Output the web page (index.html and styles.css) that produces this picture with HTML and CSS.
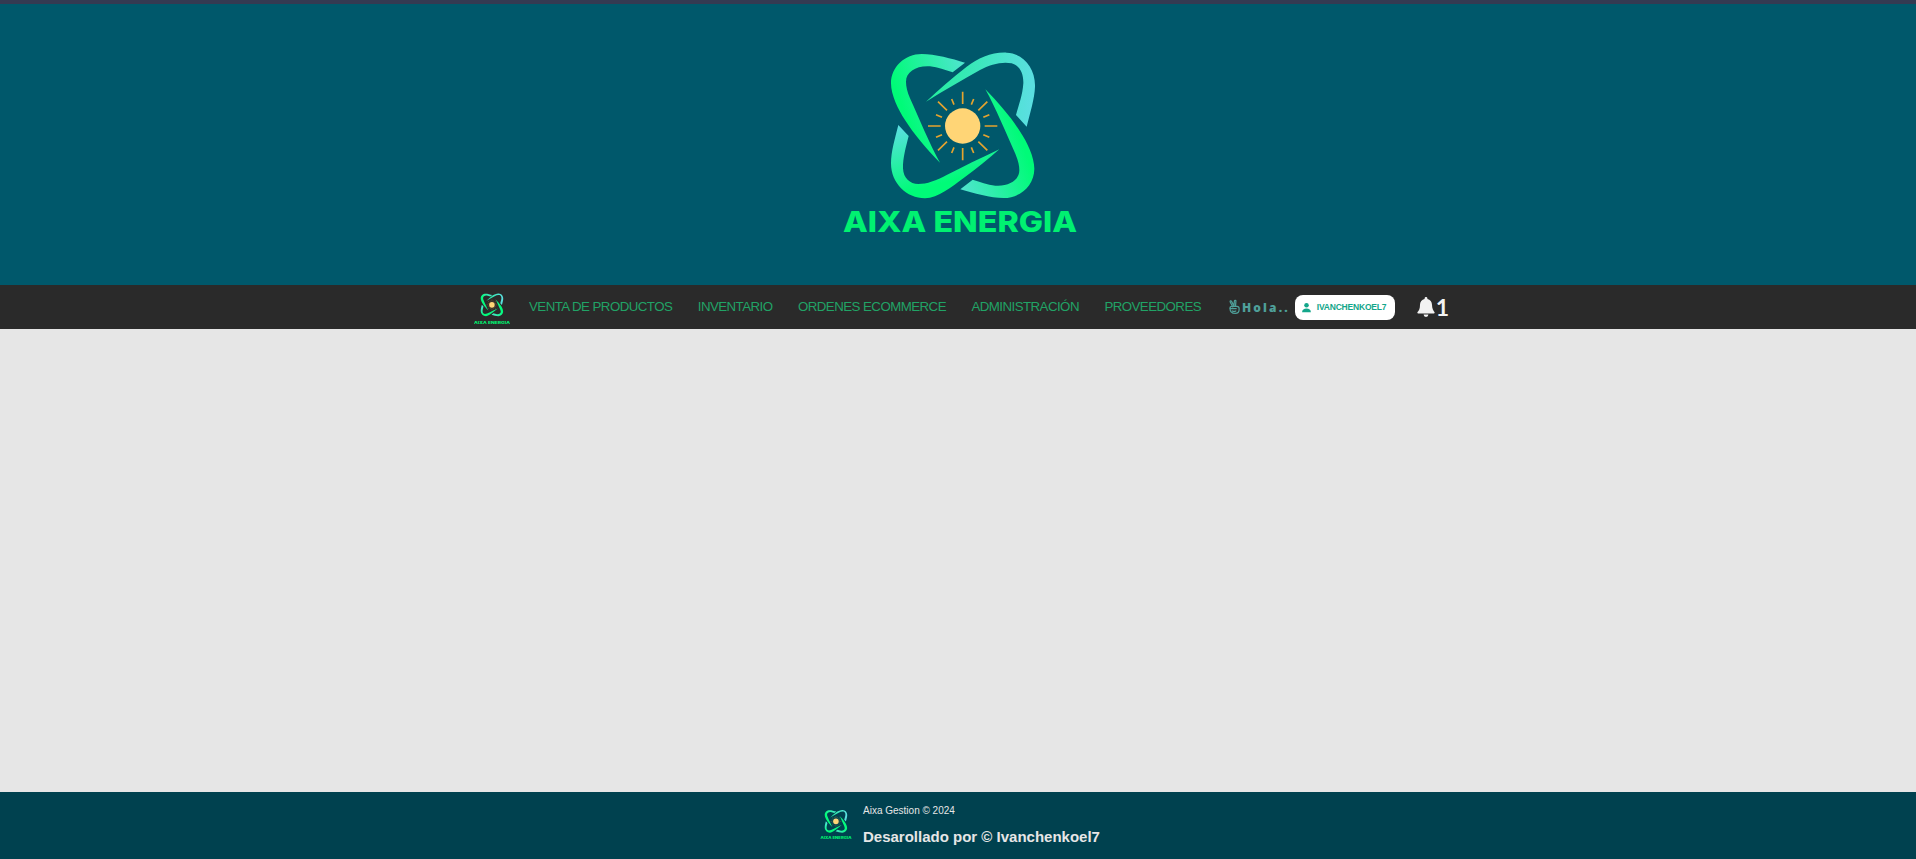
FILE: index.html
```html
<!DOCTYPE html>
<html lang="es">
<head>
<meta charset="utf-8">
<title>Aixa Energia</title>
<link rel="stylesheet" href="styles.css">
</head>
<body>
<svg class="defs" width="0" height="0" aria-hidden="true">
  <defs>
    <linearGradient id="g1" gradientUnits="userSpaceOnUse" x1="45" y1="110" x2="265" y2="30">
      <stop offset="0" stop-color="#00fb78"/>
      <stop offset="1" stop-color="#55e3d5"/>
    </linearGradient>
    <linearGradient id="g2" gradientUnits="userSpaceOnUse" x1="450" y1="170" x2="140" y2="150">
      <stop offset="0" stop-color="#5adfe0"/>
      <stop offset="1" stop-color="#22ee9c"/>
    </linearGradient>
    <linearGradient id="g4" gradientUnits="userSpaceOnUse" x1="60" y1="230" x2="110" y2="420">
      <stop offset="0" stop-color="#5adfe0"/>
      <stop offset="1" stop-color="#00fb78"/>
    </linearGradient>
    <symbol id="mark" viewBox="0 0 480 480">
      <path id="blade" fill="url(#g1)" d="M255 38 C215 26 165 12 125 12 C75 12 33 50 33 100 C33 135 55 180 75 210 C100 250 140 298 180 338 C150 285 115 200 90 145 C82 125 78 110 78 95 C78 65 110 46 150 49 C175 52 195 60 218 67 Z"/>
      <use href="#blade" transform="rotate(180 248 228)"/>
      <path fill="url(#g2)" d="M138 155 C195 120 250 88 300 60 C330 44 365 34 395 40 C420 47 431 72 430 100 C428 135 416 165 408 195 L440 230 C450 190 464 145 465 110 C467 55 430 10 380 8 C335 6 295 25 260 50 C215 85 175 120 138 155 Z"/>
      <path fill="url(#g4)" d="M358 298 C300 325 250 350 200 375 C170 392 140 402 115 402 C90 402 70 385 69 355 C68 325 78 290 86 258 L55 225 C45 265 33 305 33 340 C33 400 80 445 135 445 C175 445 215 410 250 385 C290 355 325 328 358 298 Z"/>
      <circle cx="248" cy="228" r="53" fill="#ffd576"/>
      <g stroke="#e3a32f" stroke-width="5" fill="none">
        <path d="M248 162V125M248 294V331M182 228H144M314 228H352"/>
        <path d="M201 181L174 155M295 181L322 155M201 275L174 301M295 275L322 301"/>
        <path d="M222 164L215 147M274 164L281 147M222 292L215 309M274 292L281 309"/>
        <path d="M186 202L168 194M310 202L328 194M186 254L168 262M310 254L328 262"/>
      </g>
    </symbol>
  </defs>
</svg>

<div class="strip"></div>

<header class="hero">
  <svg class="hero-logo" viewBox="0 0 320 220" role="img" aria-label="Aixa Energia">
    <use href="#mark" x="80" y="20" width="160" height="160"/>
    <text class="logo-text" x="43" y="202" textLength="234" lengthAdjust="spacingAndGlyphs">AIXA ENERGIA</text>
  </svg>
</header>

<nav class="nav">
  <a class="brand" href="#">
    <svg class="mini-logo" viewBox="0 0 36 38">
      <use href="#mark" x="5" y="5" width="25" height="25"/>
      <text class="mini-text" x="0" y="36" textLength="36" lengthAdjust="spacingAndGlyphs">AIXA ENERGIA</text>
    </svg>
  </a>
  <ul class="menu">
    <li><a href="#">VENTA DE PRODUCTOS</a></li>
    <li><a href="#">INVENTARIO</a></li>
    <li><a href="#">ORDENES ECOMMERCE</a></li>
    <li><a href="#">ADMINISTRACIÓN</a></li>
    <li><a href="#">PROVEEDORES</a></li>
  </ul>
  <div class="greet">
    <svg class="hand" viewBox="0 0 16 16" fill="none" stroke="currentColor" stroke-width="1.3" stroke-linejoin="round" stroke-linecap="round">
      <path d="M6.2 8 3.4 2.6c-.5-1 .9-1.700 1.400-.8L7.400 6.800 7.900 1.600c.1-1.100 1.700-1 1.600.1L9.100 7"/>
      <path d="M3.200 9.200c0-1.200 1-1.900 2.200-1.900h5.200c1.500 0 2.300 1 2.300 2.300v1.200c0 2.300-1.800 3.900-4.100 3.900-3 0-5.600-1.600-5.600-5.500Z"/>
      <path d="M3.400 9.800h6.400M5.600 12.200c1.200.6 2.600.6 3.800 0"/>
    </svg>
    <span class="hola">Hola..</span>
  </div>
  <div class="user-pill">
    <svg class="user-icon" viewBox="0 0 16 16" fill="currentColor"><circle cx="8" cy="4.600" r="3.300"/><path d="M1.600 15c0-3.600 2.800-5.400 6.400-5.400s6.400 1.800 6.400 5.400Z"/></svg>
    <span>IVANCHENKOEL7</span>
  </div>
  <div class="notify">
    <svg class="bell" viewBox="0 0 18 20" fill="currentColor"><path d="M9 0c-.8 0-1.400.6-1.400 1.400v.7C4.800 2.700 3 5 3 7.800c0 3.700-.9 5.700-2.400 7.200-.5.500-.3 1.500.6 1.500h15.600c.9 0 1.100-1 .6-1.500C16.300 13.500 15 11.500 15 7.800c0-2.800-1.800-5.100-4.600-5.700v-.7C10.400.6 9.800 0 9 0Z"/><path d="M6.600 17.500a2.400 2.400 0 0 0 4.800 0Z"/></svg>
    <span class="count">1</span>
  </div>
</nav>

<main class="content"></main>

<footer class="footer">
  <svg class="foot-logo" viewBox="0 0 36 38">
    <use href="#mark" x="5" y="4.500" width="25" height="25"/>
    <text class="mini-text" x="2.500" y="33.500" textLength="31" lengthAdjust="spacingAndGlyphs">AIXA ENERGIA</text>
  </svg>
  <div class="foot-text">
    <p class="foot-small">Aixa Gestion © 2024</p>
    <p class="foot-big">Desarollado por © Ivanchenkoel7</p>
  </div>
</footer>
</body>
</html>
```
FILE: styles.css
```css
* { box-sizing: border-box; }
html, body { margin: 0; padding: 0; }
body {
  height: 859px;
  display: flex;
  flex-direction: column;
  overflow: hidden;
  background: #e6e6e6;
  font-family: "Liberation Sans", Arial, sans-serif;
}
.defs { position: absolute; }
.strip { height: 4px; flex: none; background: #343a52; }
.hero {
  flex: none;
  height: 281px;
  background: #00586b;
  display: flex;
  justify-content: center;
  align-items: flex-start;
  padding-top: 26px;
  padding-left: 4px;
}
.hero-logo { width: 320px; height: 220px; display: block; }
.logo-text {
  font-family: Inter, "Liberation Sans", sans-serif;
  font-weight: 800;
  font-size: 28.5px;
  fill: #00f171;
}
.mini-text {
  font-family: Inter, "Liberation Sans", sans-serif;
  font-weight: 800;
  font-size: 4px;
  fill: #00f171;
}
.nav {
  flex: none;
  height: 44px;
  background: #2a2a2a;
  display: flex;
  align-items: center;
  padding-left: 474px;
}
.brand { display: block; width: 36px; height: 38px; }
.mini-logo { width: 36px; height: 38px; display: block; }
.menu {
  list-style: none;
  display: flex;
  gap: 25.45px;
  margin: 0 0 2px 19px;
  padding: 0;
}
.menu a {
  color: #21a366;
  font-size: 13.3px;
  letter-spacing: -0.55px;
  text-decoration: none;
}
.greet { display: flex; align-items: center; margin-left: 26px; color: #4fa09a; }
.hand { width: 15px; height: 16px; }
.hola {
  font-family: "Open Sans", sans-serif;
  font-weight: 800;
  font-size: 12px;
  letter-spacing: 2.1px;
}
.user-pill {
  margin-left: 5px;
  width: 100px;
  height: 25px;
  background: #fff;
  border-radius: 8px;
  display: flex;
  align-items: center;
  gap: 5px;
  padding-left: 6px;
  color: #13a68a;
  font-size: 8.5px;
  font-weight: 700;
  letter-spacing: -0.2px;
}
.user-icon { width: 11px; height: 11px; flex: none; }
.notify {
  margin-left: 22px;
  display: flex;
  align-items: center;
  color: #f2f2f2;
}
.bell { width: 18px; height: 20px; display: block; }
.count {
  font-family: Lato, sans-serif;
  font-weight: 700;
  font-size: 23px;
  line-height: 1;
  margin-left: 1px;
}
.content { flex: 1; background: #e6e6e6; }
.footer {
  flex: none;
  height: 67px;
  background: #00414f;
  display: flex;
  align-items: center;
  padding-left: 818px;
  gap: 9px;
}
.foot-logo { width: 36px; height: 38px; display: block; margin-bottom: 3px; }
.foot-text { color: #e6e6e6; }
.foot-small { margin: 0 0 12px; font-size: 10px; line-height: 11px; }
.foot-big { margin: 0; font-size: 15px; line-height: 18px; font-weight: 700; }
```
